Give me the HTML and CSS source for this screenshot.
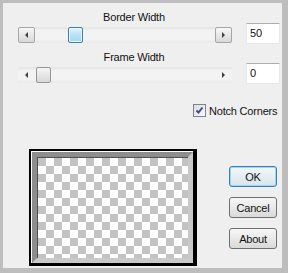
FILE: index.html
```html
<!DOCTYPE html>
<html lang="en">
<head>
    <meta charset="UTF-8">
    <title>Frame</title>
    <link rel="stylesheet" href="styles.css">
</head>
<body>
    <div class="dialog">
        <div class="caption">Border Width</div>
        <div class="slider-row">
            <div class="scrollbar">
                <div class="arrow btn"><span class="tri-left"></span></div>
                <div class="track"><div class="thumb active" style="margin-left: 33px"></div></div>
                <div class="arrow btn"><span class="tri-right"></span></div>
            </div>
            <div class="value">50</div>
        </div>

        <div class="caption second">Frame Width</div>
        <div class="slider-row">
            <div class="scrollbar">
                <div class="arrow"><span class="tri-left"></span></div>
                <div class="track"><div class="thumb" style="margin-left: 1px"></div></div>
                <div class="arrow"><span class="tri-right"></span></div>
            </div>
            <div class="value">0</div>
        </div>

        <div class="check-row">
            <span class="checkbox">
                <svg width="11" height="11" viewBox="0 0 11 11"><path d="M2.5 5.5 L4.5 7.5 L8.5 2.5" fill="none" stroke="#3a4c96" stroke-width="2"/></svg>
            </span>
            <span class="check-label">Notch Corners</span>
        </div>

        <div class="bottom">
            <div class="frame">
                <div class="frame-white">
                    <div class="frame-bevel">
                        <div class="frame-line">
                            <div class="checker"></div>
                        </div>
                    </div>
                </div>
            </div>
            <div class="buttons">
                <button class="default">OK</button>
                <button>Cancel</button>
                <button>About</button>
            </div>
        </div>
    </div>
</body>
</html>
```

FILE: styles.css
```css
body {
    margin: 0;
    background: #bdbdbd;
    font-family: "Liberation Sans", Arial, sans-serif;
    font-size: 11px;
    letter-spacing: -0.2px;
    color: #111;
}
.dialog {
    margin: 3px 0 0 3px;
    width: 279px;
    height: 265px;
    box-sizing: border-box;
    padding: 8px 0 0 15px;
    background: #efefef;
}
.caption {
    width: 232px;
    text-align: center;
    line-height: 12px;
}
.caption.second {
    margin-top: 7px;
}
.slider-row {
    display: flex;
    align-items: flex-start;
    height: 21px;
}
.scrollbar {
    display: flex;
    width: 214px;
    height: 16px;
    margin-top: 4px;
    background: linear-gradient(#e4e4e4, #f3f3f3 25%, #f3f3f3 75%, #e9e9e9);
}
.arrow {
    width: 17px;
    height: 16px;
    box-sizing: border-box;
    display: flex;
    align-items: center;
    justify-content: center;
}
.arrow.btn {
    border: 1px solid #a6a6a6;
    border-radius: 2px;
    background: linear-gradient(#f7f7f7, #d9d9d9);
}
.tri-left {
    border-right: 3px solid #404040;
    border-top: 3px solid transparent;
    border-bottom: 3px solid transparent;
}
.tri-right {
    border-left: 3px solid #404040;
    border-top: 3px solid transparent;
    border-bottom: 3px solid transparent;
}
.track {
    flex: 1;
    display: flex;
}
.thumb {
    width: 15px;
    height: 16px;
    box-sizing: border-box;
    border: 1px solid #959595;
    border-radius: 2px;
    background: linear-gradient(#f5f5f5, #d8d8d8);
}
.thumb.active {
    border-color: #3c7fb1;
    background: linear-gradient(#e2f3fc, #b9e0f6 50%, #a6d7f2);
    box-shadow: inset 0 0 0 1px #ecf7fd;
}
.value {
    margin-left: 14px;
    width: 34px;
    height: 21px;
    box-sizing: border-box;
    padding: 3px 0 0 3px;
    background: #fff;
    border: 1px solid #e3e9ef;
    border-top-color: #abadb3;
    line-height: 13px;
}
.check-row {
    display: flex;
    align-items: center;
    margin: 20px 0 0 175px;
    height: 13px;
}
.checkbox {
    width: 13px;
    height: 13px;
    box-sizing: border-box;
    border: 1px solid #7a8594;
    background: linear-gradient(135deg, #dcdcdc, #fbfbfb);
    display: flex;
}
.check-label {
    margin-left: 3px;
}
.bottom {
    display: flex;
    margin-top: 32px;
}
.frame {
    margin-left: 11px;
    width: 168px;
    height: 117px;
    box-sizing: border-box;
    border: 2px solid #000;
    border-right-width: 4px;
    border-bottom-width: 3px;
}
.frame-white {
    border-top: 1px solid #fff;
    border-left: 1px solid #fff;
}
.frame-bevel {
    border: 5px solid #c9c9c9;
    border-top-color: #8e8e8e;
    border-left-color: #8e8e8e;
}
.frame-line {
    border-top: 1px solid #505050;
    border-left: 1px solid #505050;
}
.checker {
    width: 150px;
    height: 100px;
    background-color: #fff;
    background-image: conic-gradient(#fff 25%, #c3c3c3 0 50%, #fff 0 75%, #c3c3c3 0);
    background-size: 16px 16px;
}
.buttons {
    display: flex;
    flex-direction: column;
    gap: 10px;
    margin-left: 32px;
    padding-top: 17px;
}
button {
    width: 48px;
    height: 21px;
    padding: 0;
    font-family: "Liberation Sans", Arial, sans-serif;
    font-size: 11px;
    letter-spacing: -0.2px;
    color: #111;
    border: 1px solid #707070;
    border-radius: 3px;
    background: linear-gradient(#f6f6f6, #e9e9e9 50%, #d9d9d9);
}
button.default {
    border-color: #3c7fb1;
    box-shadow: inset 0 0 0 1px #9cd5f5;
    background: linear-gradient(#f3f7fa, #e6eef4 50%, #d8e4ec);
}
```
